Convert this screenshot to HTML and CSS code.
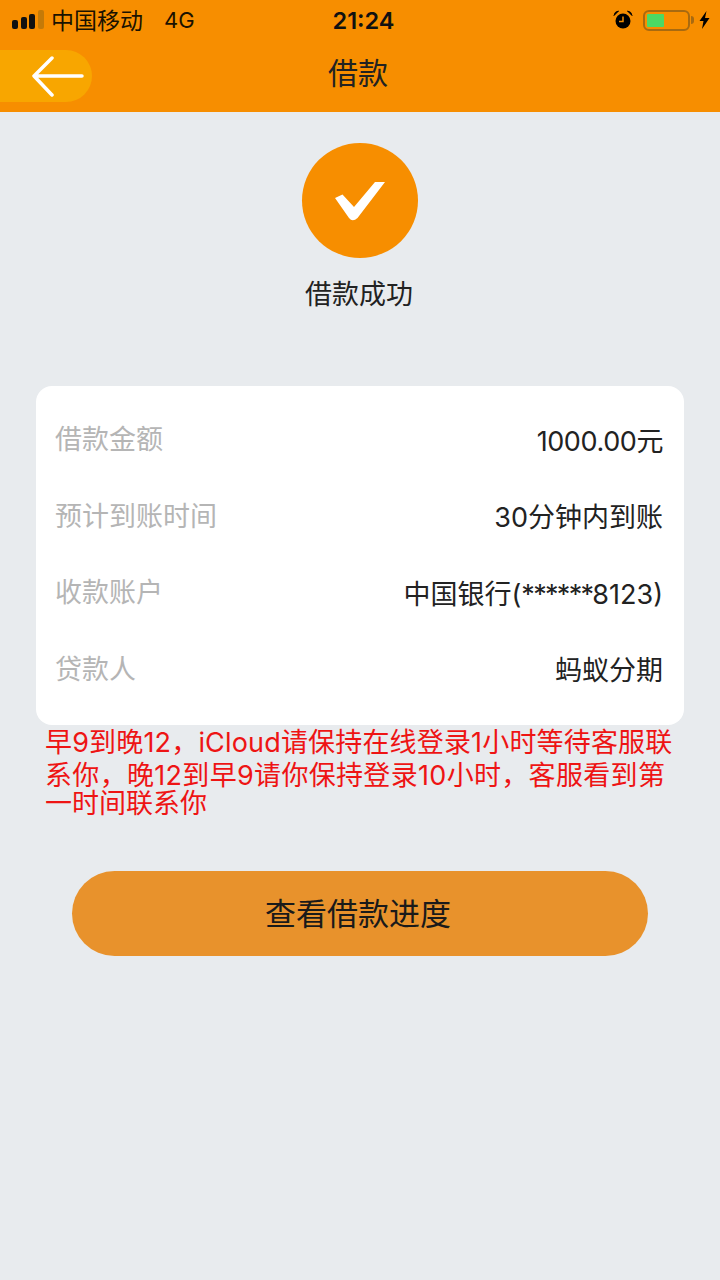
FILE: index.html
```html
<!DOCTYPE html>
<html lang="zh-CN">
<head>
<meta charset="utf-8">
<title>借款</title>
<link rel="stylesheet" href="styles.css">
</head>
<body>
<header class="top">
  <div class="status">
    <div class="status-left">
      <div class="signal"><i class="b1"></i><i class="b2"></i><i class="b3"></i><i class="b4"></i></div>
      <span class="carrier">中国移动</span>
      <span class="net">4G</span>
    </div>
    <div class="clock">21:24</div>
    <div class="status-right">
      <svg class="alarm" width="20" height="20" viewBox="0 0 20 20"><circle cx="10" cy="11" r="7.500" fill="#000"/><path d="M10 6.500V11.500H6" fill="none" stroke="#f78e00" stroke-width="1.500"/><path d="M1 5.500Q1.500 1.500 5.500 1ZM19 5.500Q18.500 1.500 14.500 1Z" fill="#000" stroke="#000" stroke-width="1"/></svg>
      <div class="battery"><div class="level"></div></div>
      <div class="nub"></div>
      <svg class="bolt" width="11" height="18" viewBox="0 0 11 18"><path d="M7.500 0L0.500 10H4.500L3 18L10.500 7H6Z" fill="#000"/></svg>
    </div>
  </div>
  <div class="nav">
    <div class="back">
      <svg width="54" height="42" viewBox="0 0 54 42"><path d="M21 3L3 21L21 40M3 21H51" fill="none" stroke="#fff" stroke-width="3.500" stroke-linecap="round" stroke-linejoin="round"/></svg>
    </div>
    <h1 class="title">借款</h1>
  </div>
</header>
<main class="content">
  <section class="result">
    <div class="badge">
      <svg width="50" height="42" viewBox="335 178 50 42"><path d="M335 196L342.500 192.500L354 205L375 180H385L357.500 216Q352.500 220.500 349 216Z" fill="#fff"/></svg>
    </div>
    <p class="result-text">借款成功</p>
  </section>
  <section class="card">
    <div class="row"><span class="label">借款金额</span><span class="value amount">1000.00元</span></div>
    <div class="row"><span class="label">预计到账时间</span><span class="value">30分钟内到账</span></div>
    <div class="row"><span class="label">收款账户</span><span class="value">中国银行(<span class="mask">******</span>8123)</span></div>
    <div class="row"><span class="label">贷款人</span><span class="value">蚂蚁分期</span></div>
  </section>
  <p class="notice">
    <span class="line l1">早9到晚12，iCloud请保持在线登录1小时等待客服联</span>
    <span class="line l2">系你，晚12到早9请你保持登录10小时，客服看到第</span>
    <span class="line l3">一时间联系你</span>
  </p>
  <button class="progress" type="button">查看借款进度</button>
</main>
</body>
</html>
```
FILE: styles.css
```css
* { box-sizing: border-box; }
html, body { margin: 0; padding: 0; }
body {
  width: 720px;
  height: 1280px;
  background: #e8ebee;
  font-family: "Inter", "Noto Sans CJK SC", sans-serif;
  overflow: hidden;
}
.top { background: #f78e00; height: 112px; }
.status {
  height: 40px;
  display: flex;
  align-items: center;
  justify-content: space-between;
  padding: 0 10px 0 12px;
  position: relative;
  color: #1a1200;
}
.status-left { display: flex; align-items: center; }
.signal { display: flex; align-items: flex-end; gap: 2.5px; width: 32px; height: 19px; margin-top: -1px; }
.signal i { display: block; width: 6px; background: #111; border-radius: 2px; }
.signal .b1 { height: 9px; }
.signal .b2 { height: 12px; }
.signal .b3 { height: 15px; }
.signal .b4 { height: 19px; background: #c47a08; }
.carrier { font-size: 23px; margin-left: 7px; margin-top: -2px; }
.net { font-size: 22px; margin-left: 21px; }
.clock {
  position: absolute;
  left: 7px;
  right: 0;
  text-align: center;
  font-size: 23.500px;
  font-weight: 600;
  color: #111;
}
.status-right { display: flex; align-items: center; }
.alarm { margin-right: 10px; }
.battery {
  width: 47px;
  height: 21px;
  border: 2px solid #a86a10;
  border-radius: 6px;
  padding: 2px;
}
.level { width: 17px; height: 100%; background: #4cd964; border-radius: 1px; }
.nub { width: 3px; height: 8px; background: #a86a10; border-radius: 0 3px 3px 0; margin-left: 1px; }
.bolt { margin-left: 5px; }
.nav { height: 72px; position: relative; display: flex; align-items: center; justify-content: center; }
.back {
  position: absolute;
  left: 0;
  top: 10px;
  width: 92px;
  height: 52px;
  background: #f8a600;
  border-radius: 0 26px 26px 0;
  padding: 5px 0 0 31px;
}
.back svg { display: block; }
.title { margin: 0 4px 10px 0; font-size: 30px; font-weight: 400; color: #222; }
.content { display: flex; flex-direction: column; align-items: center; }
.result { display: flex; flex-direction: column; align-items: center; padding-top: 31px; }
.badge {
  width: 116px;
  height: 115px;
  border-radius: 50%;
  background: #f78e00;
  display: flex;
  align-items: center;
  justify-content: center;
}
.result-text { margin: 17px 2px 0 0; font-size: 27px; line-height: 40px; color: #222; }
.card {
  width: 648px;
  height: 339px;
  margin-top: 71px;
  padding: 15px 21px 18px 19px;
  background: #fff;
  border-radius: 16px;
  display: flex;
  flex-direction: column;
  justify-content: space-between;
}
.row { display: flex; justify-content: space-between; align-items: center; height: 76px; }
.label { font-size: 27px; color: #b5b5b5; margin-top: -3px; }
.value { font-size: 27px; color: #222; }
.amount { letter-spacing: -0.4px; }
.mask { letter-spacing: -1.700px; }
.notice {
  width: 648px;
  margin: 0;
  padding: 0 0 0 9px;
  font-size: 27px;
  color: #ee1414;
  white-space: nowrap;
}
.line { display: block; }
.l1 { line-height: 35px; letter-spacing: 0.17px; }
.l2 { line-height: 32px; letter-spacing: 0.32px; }
.l3 { line-height: 23px; }
.progress {
  width: 576px;
  height: 85px;
  margin-top: 56px;
  border: 0;
  border-radius: 43px;
  background: #e8922c;
  font: inherit;
  font-size: 31px;
  color: #1a1a1a;
  padding: 0 4px 5px 0;
}
```
